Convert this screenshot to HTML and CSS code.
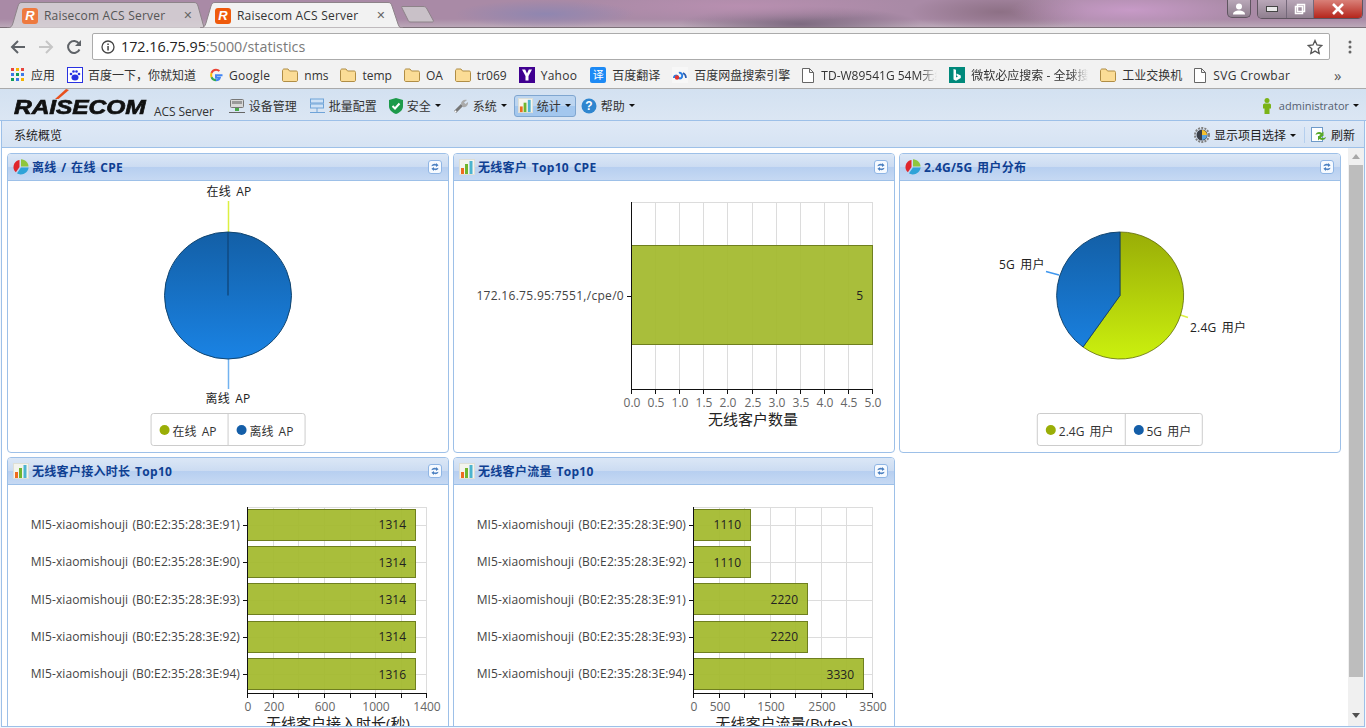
FILE: index.html
```html
<!DOCTYPE html>
<html lang="en">
<head>
    <meta charset="UTF-8">
    <title>Raisecom ACS Server</title>
    <link rel="stylesheet" href="styles.css">
</head>
<body>

    <svg class="defs" width="0" height="0">
        <defs>
            <linearGradient id="pieBlue" gradientUnits="userSpaceOnUse" x1="0" y1="232" x2="0" y2="359">
                <stop offset="0" stop-color="#135fa6"/>
                <stop offset="1" stop-color="#1a83e4"/>
            </linearGradient>
            <linearGradient id="pieGreen" gradientUnits="userSpaceOnUse" x1="0" y1="232" x2="0" y2="359">
                <stop offset="0" stop-color="#99ad07"/>
                <stop offset="1" stop-color="#cbf00e"/>
            </linearGradient>
            <symbol id="i-pie" viewBox="0 0 16 16">
                <path d="M6.500 1C3 1.500.3 4.500.5 8.500c.1 2 1 3.600 2.400 4.800L6.500 8z" fill="#e0262c"/>
                <path d="M8 .3V7.500h7.500C15.500 3.500 12 .5 8 .3z" fill="#8fc63c"/>
                <path d="M8 8.500h7.600C15.300 12.500 11.500 15.600 7.600 15.500 6.200 15.500 5 15 4 14.300z" fill="#2fa3d8"/>
            </symbol>
            <symbol id="i-bars" viewBox="0 0 16 16">
                <rect x=".5" y=".5" width="15" height="15" fill="#f4f4ee" stroke="#dedfd6"/>
                <rect x="2" y="9" width="3" height="6" fill="#ee6a1f"/>
                <rect x="6" y="5" width="3" height="10" fill="#6fb52e"/>
                <rect x="10.500" y="2" width="3" height="13" fill="#4cb4cf"/>
            </symbol>
            <symbol id="i-sync" viewBox="0 0 14 14">
                <rect x=".5" y=".5" width="13" height="13" rx="2.500" fill="#f6faff" stroke="#8fb5e4"/>
                <path d="M3.500 6.200C3.800 4.300 6 3.300 8 4.200V3l2.600 2.200L8 7V5.800C6.600 5.200 5.300 5.400 3.500 6.200z" fill="#4a7fc0"/>
                <path d="M10.500 7.800C10.200 9.700 8 10.700 6 9.800V11L3.400 8.800 6 7v1.200c1.400.6 2.700.4 4.500-.4z" fill="#4a7fc0"/>
            </symbol>
            <symbol id="i-folder" viewBox="0 0 16 14">
                <path d="M.5 3c0-1 .5-2 1.500-2h4l1.500 2H14c1 0 1.500.5 1.500 1.500V12c0 1-.5 1.500-1.500 1.500H2c-1 0-1.500-.5-1.500-1.500z" fill="#fbdc96" stroke="#b08d45"/>
            </symbol>
            <symbol id="i-doc" viewBox="0 0 12 15">
                <path d="M.5.500h7l4 4v10H.5zM7.500.500v4h4" fill="#fff" stroke="#666"/>
            </symbol>
        </defs>
    </svg>

    <div class="tabstrip">
        <div class="tab">
            <svg class="tab-shape" width="198" height="26" viewBox="0 0 198 26"><path d="M0 26C4 26 5 24 6 21L11 4C12 1 13 .5 15 .5H187C189 .5 190 1 191 4L196 22C197 25 197 26 198 26" fill="#d7d2d6" fill-opacity=".85" stroke="#8d8389"/></svg>
            <span class="favicon favicon-dim">R</span>
            <span class="tab-title tab-title-dim">Raisecom ACS Server</span>
            <span class="tab-close">✕</span>
        </div>
        <div class="tab tab-active">
            <svg class="tab-shape" width="203" height="26" viewBox="0 0 203 26"><path d="M0 26C4 26 5 24 6 21L11 4C12 1 13 .5 15 .5H188C190 .5 191 1 192 4L198 22C199 25 200 26 203 26z" fill="#f2f2f2" stroke="#8d8389"/></svg>
            <span class="favicon">R</span>
            <span class="tab-title">Raisecom ACS Server</span>
            <span class="tab-close">✕</span>
        </div>
        <svg class="new-tab" width="34" height="18" viewBox="0 0 34 18"><path d="M1 1.500H22C24 1.500 25 2 26 4L32 15C33 16.500 32 17 31 17H10C8 17 7.500 16.500 7 15L1 3C.5 2 .5 1.500 1 1.500z" fill="#c9c1c8" stroke="#8d8389"/></svg>
        <div class="window-controls">
            <span class="win-btn win-user">
                <svg width="14" height="12" viewBox="0 0 14 12"><circle cx="7" cy="3.500" r="3" fill="#fff"/><path d="M1 11.500c0-3 3-4 6-4s6 1 6 4z" fill="#fff"/></svg>
            </span>
            <div class="win-group">
                <span class="win-btn win-min"><svg width="12" height="6" viewBox="0 0 12 6"><rect x=".5" y=".5" width="11" height="5" fill="#e8e8e8" stroke="#444"/></svg></span>
                <span class="win-btn win-max"><svg width="12" height="12" viewBox="0 0 12 12"><path d="M3.500 1.500h7v7h-7zM1.500 3.500h7v7h-7z" fill="none" stroke="#fff" stroke-width="1.500"/></svg></span>
                <span class="win-btn win-close"><svg width="14" height="12" viewBox="0 0 14 12"><path d="M2 1l10 10M12 1L2 11" stroke="#fff" stroke-width="2.600"/></svg></span>
            </div>
        </div>
    </div>

    <div class="urlbar">
        <svg class="url-nav" width="16" height="16" viewBox="0 0 16 16"><path d="M15 8H2M8 2L2 8l6 6" fill="none" stroke="#5f6368" stroke-width="2"/></svg>
        <svg class="url-nav" width="16" height="16" viewBox="0 0 16 16"><path d="M1 8h13M8 2l6 6-6 6" fill="none" stroke="#c6c6c6" stroke-width="2"/></svg>
        <svg class="url-nav" width="16" height="16" viewBox="0 0 16 16"><path d="M13.500 10.500A6 6 0 1 1 13 4.500" fill="none" stroke="#5f6368" stroke-width="2"/><path d="M15 1v6H9z" fill="#5f6368"/></svg>
        <div class="omnibox">
            <svg width="14" height="14" viewBox="0 0 14 14"><circle cx="7" cy="7" r="6" fill="none" stroke="#444" stroke-width="1.300"/><rect x="6.300" y="6" width="1.500" height="4.500" fill="#444"/><rect x="6.300" y="3.500" width="1.500" height="1.500" fill="#444"/></svg>
            <span class="url-text">172.16.75.95<span class="url-dim">:5000/statistics</span></span>
            <svg class="url-star" width="16" height="16" viewBox="0 0 16 16"><path d="M8 1.500l2 4.500 4.800.5-3.600 3.200 1 4.800L8 12.100 3.800 14.500l1-4.800L1.200 6.500 6 6z" fill="none" stroke="#555" stroke-width="1.300"/></svg>
        </div>
        <svg class="url-menu" width="4" height="14" viewBox="0 0 4 14"><circle cx="2" cy="2" r="1.500" fill="#666"/><circle cx="2" cy="7" r="1.500" fill="#666"/><circle cx="2" cy="12" r="1.500" fill="#666"/></svg>
    </div>

    <div class="bookmarks">
        <div class="bm bm-tight">
            <svg width="14" height="14" viewBox="0 0 14 14">
                <rect width="3" height="3" fill="#e8453c"/><rect x="5" width="3" height="3" fill="#f4b400"/><rect x="10" width="3" height="3" fill="#e8453c"/>
                <rect y="5" width="3" height="3" fill="#3b78e7"/><rect x="5" y="5" width="3" height="3" fill="#0f9d58"/><rect x="10" y="5" width="3" height="3" fill="#3b78e7"/>
                <rect y="10" width="3" height="3" fill="#0f9d58"/><rect x="5" y="10" width="3" height="3" fill="#3b78e7"/><rect x="10" y="10" width="3" height="3" fill="#f4b400"/>
            </svg>
            <span>应用</span>
        </div>
        <div class="bm bm-tight">
            <svg width="16" height="16" viewBox="0 0 16 16"><rect x=".5" y=".5" width="15" height="15" fill="#fff" stroke="#2932e1"/><ellipse cx="8" cy="10.500" rx="3.500" ry="3" fill="#2932e1"/><circle cx="4" cy="7" r="1.300" fill="#2932e1"/><circle cx="6.500" cy="4.500" r="1.300" fill="#2932e1"/><circle cx="9.500" cy="4.500" r="1.300" fill="#2932e1"/><circle cx="12" cy="7" r="1.300" fill="#2932e1"/></svg>
            <span>百度一下，你就知道</span>
        </div>
        <div class="bm bm-tight">
            <svg width="16" height="16" viewBox="0 0 16 16"><path d="M14.500 8.200H8v2.500h3.800C11.300 12.400 9.800 13.300 8 13.300" fill="none" stroke="#4285f4" stroke-width="2"/><path d="M8 13.300c-2 0-3.800-1.300-4.500-3.100" fill="none" stroke="#34a853" stroke-width="2"/><path d="M3.500 10.200c-.5-1.400-.5-2.900 0-4.300" fill="none" stroke="#fbbc05" stroke-width="2"/><path d="M3.500 5.900C4.200 4 6 2.700 8 2.700c1.300 0 2.500.5 3.400 1.300" fill="none" stroke="#ea4335" stroke-width="2"/></svg>
            <span class="bm-wide">Google</span>
        </div>
        <div class="bm"><svg width="16" height="14"><use href="#i-folder"/></svg><span>nms</span></div>
        <div class="bm"><svg width="16" height="14"><use href="#i-folder"/></svg><span>temp</span></div>
        <div class="bm"><svg width="16" height="14"><use href="#i-folder"/></svg><span>OA</span></div>
        <div class="bm"><svg width="16" height="14"><use href="#i-folder"/></svg><span>tr069</span></div>
        <div class="bm">
            <svg width="16" height="16" viewBox="0 0 16 16"><rect width="16" height="16" fill="#400090"/><path d="M3 2.500h3.200L8 6.500l1.800-4H13L9.500 9v4.500h-3V9z" fill="#fff"/></svg>
            <span class="bm-wide">Yahoo</span>
        </div>
        <div class="bm bm-translate">
            <span class="ico-translate">译</span>
            <span>百度翻译</span>
        </div>
        <div class="bm">
            <svg width="16" height="16" viewBox="0 0 16 16"><rect width="16" height="16" fill="#f7f7f7"/><path d="M2 11c0-3 3-3 4-1s3 2 4 0-1-5-3-4" fill="none" stroke="#2a7de1" stroke-width="2"/><circle cx="5" cy="10.500" r="2.200" fill="#e2332e"/><path d="M11 6c2 1 3 3 3 5" fill="none" stroke="#2a5db0" stroke-width="1.600"/></svg>
            <span>百度网盘搜索引擎</span>
        </div>
        <div class="bm bm-doc"><svg width="12" height="15"><use href="#i-doc"/></svg><span class="bm-fade bm-fade-td">TD-W89541G 54M无线</span></div>
        <div class="bm">
            <svg width="16" height="16" viewBox="0 0 16 16"><rect width="16" height="16" fill="#00897b"/><path d="M4.500 2v10.500l2.500 1.200 4.800-2.800V8.500L7.500 6.500v2L9 9.300 7 10.500V2.800z" fill="#fff"/></svg>
            <span class="bm-fade bm-fade-bing">微软必应搜索 - 全球搜索</span>
        </div>
        <div class="bm"><svg width="16" height="14"><use href="#i-folder"/></svg><span>工业交换机</span></div>
        <div class="bm bm-doc"><svg width="12" height="15"><use href="#i-doc"/></svg><span class="bm-wide">SVG Crowbar</span></div>
        <span class="bm-more">»</span>
    </div>

    <div class="app-header">
        <div class="logo">
            <span class="logo-text">RAISECOM</span>
            <svg class="logo-swoosh" width="14" height="10" viewBox="0 0 14 10"><path d="M0 10L11 0l3 1L3.500 10z" fill="#e8501e"/></svg>
        </div>
        <span class="logo-sub">ACS Server</span>
        <nav class="nav">
            <div class="nav-item">
                <svg width="16" height="16" viewBox="0 0 16 16"><rect x="1.500" y="1.500" width="13" height="8" rx="1" fill="#d8d8d8" stroke="#777"/><rect x="3" y="3" width="10" height="3" fill="#999"/><rect x="6" y="10" width="4" height="3" fill="#4aa84a"/><path d="M0 14.500h16" stroke="#666"/></svg>
                <span>设备管理</span>
            </div>
            <div class="nav-item">
                <svg width="16" height="16" viewBox="0 0 16 16"><rect x="1.500" y="1" width="13" height="4" fill="#cfe2f6" stroke="#6fa3d8"/><rect x="1.500" y="6" width="13" height="4" fill="#cfe2f6" stroke="#6fa3d8"/><path d="M8 10v4M1 14.500h15" stroke="#6fa3d8"/></svg>
                <span>批量配置</span>
            </div>
            <div class="nav-item">
                <svg width="14" height="16" viewBox="0 0 14 16"><path d="M7 0l7 2v6c0 4-3 6.500-7 8-4-1.500-7-4-7-8V2z" fill="#1c9a4a"/><path d="M3.500 8l2.500 2.500 4.500-5" fill="none" stroke="#fff" stroke-width="2"/></svg>
                <span>安全</span><i class="caret"></i>
            </div>
            <div class="nav-item">
                <svg width="16" height="16" viewBox="0 0 16 16"><path d="M2 14l7-7" stroke="#777" stroke-width="3"/><circle cx="2.500" cy="13.500" r="1" fill="#fff"/><path d="M8 6c0-3 3-5 6-4l-3 2.500 1.500 1.500L15 4c.5 3-2 6-5 5z" fill="#aaa"/></svg>
                <span>系统</span><i class="caret"></i>
            </div>
            <div class="nav-item nav-active">
                <svg width="15" height="15"><use href="#i-bars"/></svg>
                <span>统计</span><i class="caret"></i>
            </div>
            <div class="nav-item">
                <svg width="16" height="16" viewBox="0 0 16 16"><circle cx="8" cy="8" r="7.500" fill="#2f86cf"/><text class="help-mark" x="8" y="12" text-anchor="middle">?</text></svg>
                <span>帮助</span><i class="caret"></i>
            </div>
        </nav>
        <div class="user">
            <svg width="10" height="16" viewBox="0 0 10 16"><circle cx="5" cy="2.500" r="2.500" fill="#7ab317"/><path d="M1 7c0-1 1-1.500 2-1.500h4c1 0 2 .5 2 1.500v3.500H7.500V16h-5v-5.500H1z" fill="#7ab317"/></svg>
            <span>administrator</span><i class="caret"></i>
        </div>
    </div>

    <div class="workspace">
        <div class="toolbar">
            <span class="toolbar-title">系统概览</span>
            <div class="toolbar-right">
                <div class="tool">
                    <svg width="16" height="16" viewBox="0 0 16 16"><circle cx="8" cy="8" r="7" fill="none" stroke="#808080" stroke-width="2" stroke-dasharray="2 1.200"/><circle cx="8" cy="8" r="5.500" fill="#3a3f48"/><path d="M8 3a5 5 0 0 1 5 5H8z" fill="#f3c02f"/><path d="M13 8a5 5 0 0 1-5 5V8z" fill="#5ba3dd"/></svg>
                    <span>显示项目选择</span><i class="caret"></i>
                </div>
                <span class="tool-sep"></span>
                <div class="tool">
                    <svg width="16" height="16" viewBox="0 0 16 16"><rect x=".5" y=".5" width="11" height="14" fill="#fff" stroke="#6e9ac9"/><path d="M4.500 8C5 5 8.500 4 11 6l1.500-1.500V9H8l1.500-1.500C8 6.500 6 7 4.500 8z" fill="#57a829"/><path d="M15 10c-.5 3-4 4-6.500 2L7 13.500V9h4.500L10 10.500c1.500 1 3.500.5 5-.5z" fill="#57a829"/></svg>
                    <span>刷新</span>
                </div>
            </div>
        </div>

        <div class="content">
            <div class="panels">

                <section class="panel">
                    <header class="panel-head">
                        <svg width="16" height="16"><use href="#i-pie"/></svg>
                        <h3>离线 / 在线 CPE</h3>
                        <svg class="panel-sync" width="14" height="14"><use href="#i-sync"/></svg>
                    </header>
                    <div class="panel-body">
                        <svg class="chart" width="440" height="271" viewBox="8 181 440 271">
                            <path d="M228.500 201V232" stroke="#dcf042" stroke-width="1.500"/>
                            <path d="M228.500 359V389" stroke="#72b2f0" stroke-width="1.500"/>
                            <circle cx="228" cy="295.500" r="63.500" fill="url(#pieBlue)" stroke="#12456f"/>
                            <path d="M228 232V295.500" stroke="#0f4a82" stroke-width="1.500"/>
                            <text class="pie-label" x="229" y="196" text-anchor="middle">在线 AP</text>
                            <text class="pie-label" x="228" y="403" text-anchor="middle">离线 AP</text>
                        </svg>
                        <div class="legend">
                            <div class="legend-item"><i class="dot dot-green"></i><span>在线 AP</span></div>
                            <div class="legend-item"><i class="dot dot-blue"></i><span>离线 AP</span></div>
                        </div>
                    </div>
                </section>

                <section class="panel">
                    <header class="panel-head">
                        <svg width="16" height="16"><use href="#i-bars"/></svg>
                        <h3>无线客户 Top10 CPE</h3>
                        <svg class="panel-sync" width="14" height="14"><use href="#i-sync"/></svg>
                    </header>
                    <div class="panel-body">
                        <svg class="chart" width="440" height="271" viewBox="454 181 440 271">
                            <path class="grid" d="M631.500 202.500H872.500M655.500 202V389M679.500 202V389M703.500 202V389M727.500 202V389M752.500 202V389M776.500 202V389M800.500 202V389M824.500 202V389M848.500 202V389M872.500 202V389"/>
                            <rect class="bar" x="631.500" y="245.500" width="241" height="99"/>
                            <path class="axis" d="M631.500 202V389.500H872.500M631.500 389V394M655.500 389V394M679.500 389V394M703.500 389V394M727.500 389V394M752.500 389V394M776.500 389V394M800.500 389V394M824.500 389V394M848.500 389V394M872.500 389V394M627 296.500H631"/>
                            <text class="bar-value" x="863" y="300" text-anchor="end">5</text>
                            <text class="cat-label cat-label-ip" x="624" y="300" text-anchor="end">172.16.75.95:7551,/cpe/0</text>
                            <g class="tick-label" text-anchor="middle">
                                <text x="632" y="407">0.0</text><text x="656" y="407">0.5</text><text x="680" y="407">1.0</text><text x="704" y="407">1.5</text><text x="728" y="407">2.0</text><text x="753" y="407">2.5</text><text x="777" y="407">3.0</text><text x="801" y="407">3.5</text><text x="825" y="407">4.0</text><text x="849" y="407">4.5</text><text x="873" y="407">5.0</text>
                            </g>
                            <text class="axis-title" x="753" y="425" text-anchor="middle">无线客户数量</text>
                        </svg>
                    </div>
                </section>

                <section class="panel">
                    <header class="panel-head">
                        <svg width="16" height="16"><use href="#i-pie"/></svg>
                        <h3>2.4G/5G 用户分布</h3>
                        <svg class="panel-sync" width="14" height="14"><use href="#i-sync"/></svg>
                    </header>
                    <div class="panel-body">
                        <svg class="chart" width="440" height="271" viewBox="900 181 440 271">
                            <path d="M1179 314.500L1188 317.500" stroke="#dcf042" stroke-width="1.500"/>
                            <path d="M1059 275L1046 271.500" stroke="#3f97ee" stroke-width="1.500"/>
                            <path d="M1120 295.500V232A63.500 63.500 0 1 1 1083 347z" fill="url(#pieGreen)" stroke="#5f6b0a" stroke-width=".8"/>
                            <path d="M1120 295.500L1083 347A63.500 63.500 0 0 1 1120 232z" fill="url(#pieBlue)" stroke="#12456f"/>
                            <text class="pie-label" x="999" y="269">5G 用户</text>
                            <text class="pie-label" x="1190" y="332">2.4G 用户</text>
                        </svg>
                        <div class="legend">
                            <div class="legend-item"><i class="dot dot-green"></i><span>2.4G 用户</span></div>
                            <div class="legend-item"><i class="dot dot-blue"></i><span>5G 用户</span></div>
                        </div>
                    </div>
                </section>

                <section class="panel">
                    <header class="panel-head">
                        <svg width="16" height="16"><use href="#i-bars"/></svg>
                        <h3>无线客户接入时长 Top10</h3>
                        <svg class="panel-sync" width="14" height="14"><use href="#i-sync"/></svg>
                    </header>
                    <div class="panel-body">
                        <svg class="chart" width="440" height="271" viewBox="8 485 440 271">
                            <path class="grid" d="M247.500 507.500H426.500M247 525.500H426M247 562.500H426M247 600.500H426M247 637.500H426M247 674.500H426M273.500 507V693M298.500 507V693M324.500 507V693M350.500 507V693M375.500 507V693M401.500 507V693M426.500 507V693"/>
                            <rect class="bar" x="247.500" y="509.500" width="168" height="31"/>
                            <rect class="bar" x="247.500" y="546.500" width="168" height="31"/>
                            <rect class="bar" x="247.500" y="583.500" width="168" height="31"/>
                            <rect class="bar" x="247.500" y="621.500" width="168" height="31"/>
                            <rect class="bar" x="247.500" y="658.500" width="168" height="31"/>
                            <path class="axis" d="M247.500 507V693.500H426.500M247.500 693V698M273.500 693V698M298.500 693V698M324.500 693V698M350.500 693V698M375.500 693V698M401.500 693V698M426.500 693V698M243 525.500H247M243 562.500H247M243 600.500H247M243 637.500H247M243 674.500H247"/>
                            <g class="bar-value" text-anchor="end">
                                <text x="406" y="529">1314</text><text x="406" y="567">1314</text><text x="406" y="604">1314</text><text x="406" y="641">1314</text><text x="406" y="679">1316</text>
                            </g>
                            <g class="cat-label" text-anchor="end">
                                <text x="240" y="529">MI5-xiaomishouji (B0:E2:35:28:3E:91)</text>
                                <text x="240" y="566">MI5-xiaomishouji (B0:E2:35:28:3E:90)</text>
                                <text x="240" y="604">MI5-xiaomishouji (B0:E2:35:28:3E:93)</text>
                                <text x="240" y="641">MI5-xiaomishouji (B0:E2:35:28:3E:92)</text>
                                <text x="240" y="678">MI5-xiaomishouji (B0:E2:35:28:3E:94)</text>
                            </g>
                            <g class="tick-label" text-anchor="middle">
                                <text x="248" y="711">0</text><text x="274" y="711">200</text><text x="325" y="711">600</text><text x="376" y="711">1000</text><text x="427" y="711">1400</text>
                            </g>
                            <text class="axis-title" x="338" y="729" text-anchor="middle">无线客户接入时长(秒)</text>
                        </svg>
                    </div>
                </section>

                <section class="panel">
                    <header class="panel-head">
                        <svg width="16" height="16"><use href="#i-bars"/></svg>
                        <h3>无线客户流量 Top10</h3>
                        <svg class="panel-sync" width="14" height="14"><use href="#i-sync"/></svg>
                    </header>
                    <div class="panel-body">
                        <svg class="chart" width="440" height="271" viewBox="454 485 440 271">
                            <path class="grid" d="M693.500 507.500H872.500M693 525.500H872M693 562.500H872M693 600.500H872M693 637.500H872M693 674.500H872M719.500 507V693M744.500 507V693M770.500 507V693M795.500 507V693M821.500 507V693M846.500 507V693M872.500 507V693"/>
                            <rect class="bar" x="693.500" y="509.500" width="57" height="31"/>
                            <rect class="bar" x="693.500" y="546.500" width="57" height="31"/>
                            <rect class="bar" x="693.500" y="583.500" width="114" height="31"/>
                            <rect class="bar" x="693.500" y="621.500" width="114" height="31"/>
                            <rect class="bar" x="693.500" y="658.500" width="170" height="31"/>
                            <path class="axis" d="M693.500 507V693.500H872.500M693.500 693V698M719.500 693V698M744.500 693V698M770.500 693V698M795.500 693V698M821.500 693V698M846.500 693V698M872.500 693V698M689 525.500H693M689 562.500H693M689 600.500H693M689 637.500H693M689 674.500H693"/>
                            <g class="bar-value" text-anchor="end">
                                <text x="741" y="529">1110</text><text x="741" y="567">1110</text><text x="798" y="604">2220</text><text x="798" y="641">2220</text><text x="854" y="679">3330</text>
                            </g>
                            <g class="cat-label" text-anchor="end">
                                <text x="686" y="529">MI5-xiaomishouji (B0:E2:35:28:3E:90)</text>
                                <text x="686" y="566">MI5-xiaomishouji (B0:E2:35:28:3E:92)</text>
                                <text x="686" y="604">MI5-xiaomishouji (B0:E2:35:28:3E:91)</text>
                                <text x="686" y="641">MI5-xiaomishouji (B0:E2:35:28:3E:93)</text>
                                <text x="686" y="678">MI5-xiaomishouji (B0:E2:35:28:3E:94)</text>
                            </g>
                            <g class="tick-label" text-anchor="middle">
                                <text x="694" y="711">0</text><text x="720" y="711">500</text><text x="771" y="711">1500</text><text x="822" y="711">2500</text><text x="873" y="711">3500</text>
                            </g>
                            <text class="axis-title" x="784" y="729" text-anchor="middle">无线客户流量(Bytes)</text>
                        </svg>
                    </div>
                </section>

            </div>
            <div class="scrollbar">
                <i class="scroll-up"></i>
                <div class="scroll-thumb"></div>
                <i class="scroll-down"></i>
            </div>
        </div>
    </div>

</body>
</html>
```

FILE: styles.css
```css
* {
    box-sizing: border-box;
}

html, body {
    margin: 0;
    padding: 0;
}

body {
    width: 1366px;
    height: 728px;
    overflow: hidden;
    background-color: #f4f8fd;
    font-family: "Open Sans", "Noto Sans CJK SC", sans-serif;
    font-size: 12px;
    color: #333;
}

.defs {
    position: absolute;
}

/* browser frame */
.tabstrip {
    position: relative;
    display: flex;
    align-items: flex-end;
    height: 28px;
    padding-left: 7px;
    border-bottom: 1px solid #7d7079;
    background:
        radial-gradient(ellipse 90px 14px at 545px 14px, #8f86b0 0, transparent 100%),
        radial-gradient(ellipse 170px 16px at 740px 6px, #b88fb0 0, transparent 100%),
        radial-gradient(ellipse 120px 18px at 800px 24px, #7d6a80 0, transparent 100%),
        radial-gradient(ellipse 120px 20px at 1130px 10px, #c79ac7 0, transparent 100%),
        radial-gradient(ellipse 90px 20px at 1000px 12px, #8d7085 0, transparent 100%),
        linear-gradient(to bottom, #a98aa6 0, #a98aa6 70%, #bba8b8 100%);
}

.tab {
    position: relative;
    display: flex;
    align-items: center;
    width: 198px;
    height: 25px;
    padding: 2px 0 0 15px;
}

.tab-active {
    width: 203px;
    margin-left: -5px;
}

.tab-shape {
    position: absolute;
    left: 0;
    bottom: -1px;
}

.favicon {
    position: relative;
    width: 16px;
    height: 16px;
    border-radius: 3px;
    background-color: #ef5a0c;
    color: #fff;
    font-family: "Liberation Sans", sans-serif;
    font-size: 13px;
    font-weight: bold;
    font-style: italic;
    line-height: 16px;
    text-align: center;
}

.favicon-dim {
    background-color: #ee7a3f;
}

.tab-title {
    position: relative;
    margin-left: 6px;
    font-size: 12px;
    letter-spacing: .2px;
    color: #333;
    white-space: nowrap;
}

.tab-title-dim {
    color: #555;
}

.tab-close {
    position: relative;
    margin-left: 18px;
    font-size: 11px;
    font-family: "DejaVu Sans", sans-serif;
    color: #666;
}

.new-tab {
    margin: 0 0 4px -2px;
}

.window-controls {
    position: absolute;
    top: 0;
    right: 3px;
    display: flex;
    gap: 6px;
}

.win-btn {
    display: flex;
    align-items: center;
    justify-content: center;
    height: 18px;
}

.win-user {
    width: 24px;
    border: 1px solid #5f5560;
    border-top: none;
    border-radius: 0 0 5px 5px;
    background: linear-gradient(to bottom, #b9a7b8, #8f7f8f);
}

.win-group {
    display: flex;
    border: 1px solid #5f5560;
    border-top: none;
    border-radius: 0 0 5px 5px;
    overflow: hidden;
}

.win-min, .win-max {
    width: 29px;
    background: linear-gradient(to bottom, #b9a7b8, #8f7f8f);
    border-right: 1px solid #74687a;
}

.win-max {
    width: 27px;
}

.win-close {
    width: 48px;
    background: linear-gradient(to bottom, #d98078, #b5261c);
}

.urlbar {
    display: flex;
    align-items: center;
    height: 32px;
    padding: 5px 0 0 10px;
    background-color: #f2f2f2;
}

.url-nav {
    margin-right: 12px;
}

.omnibox {
    display: flex;
    align-items: center;
    width: 1238px;
    height: 27px;
    margin-left: -2px;
    padding: 0 6px 0 8px;
    border: 1px solid #ababab;
    border-radius: 2px;
    background-color: #fff;
}

.url-text {
    margin-left: 6px;
    font-size: 14.3px;
    color: #222;
}

.url-dim {
    color: #7a7a7a;
}

.url-star {
    margin-left: auto;
}

.url-menu {
    margin-left: 18px;
}

.bookmarks {
    display: flex;
    align-items: center;
    gap: 12px;
    height: 29px;
    padding: 2px 0 0 11px;
    border-bottom: 1px solid #aaa;
    background-color: #f2f2f2;
    white-space: nowrap;
    color: #333;
}

.bm {
    display: flex;
    align-items: center;
    gap: 6px;
}

.bm-tight {
    gap: 5px;
}

.bm-tight:first-child {
    gap: 6px;
}

.bm-wide {
    letter-spacing: .3px;
}

.bm-translate {
    margin-left: 1px;
}

.ico-translate {
    width: 16px;
    height: 16px;
    border-radius: 2px;
    background-color: #1d8af5;
    color: #fff;
    font-size: 11px;
    line-height: 16px;
    text-align: center;
}

.bm-fade {
    overflow: hidden;
    -webkit-mask-image: linear-gradient(to right, #000 85%, transparent 100%);
    mask-image: linear-gradient(to right, #000 85%, transparent 100%);
}

.bm-fade-td {
    width: 116px;
}

.bm-fade-bing {
    width: 117px;
}

.bm-doc {
    gap: 7px;
}

.bm-more {
    position: absolute;
    left: 1334px;
    top: 65px;
    font-size: 15px;
    color: #555;
}

/* app header */
.app-header {
    display: flex;
    align-items: center;
    height: 32px;
    padding: 2px 0 0 14px;
    border-bottom: 1px solid #9dc0e8;
    background: linear-gradient(to bottom, #d3e1f1, #dbe6f3);
}

.logo {
    position: relative;
    flex: none;
    width: 133px;
    height: 22px;
}

.logo-text {
    position: absolute;
    left: 0;
    top: 1px;
    font-family: "Liberation Sans", sans-serif;
    font-size: 21px;
    font-weight: bold;
    font-style: italic;
    line-height: 22px;
    color: #111;
    letter-spacing: -.1px;
    -webkit-text-stroke: .7px #111;
    transform: scaleX(1.17);
    transform-origin: left center;
}

.logo-swoosh {
    position: absolute;
    left: 41px;
    top: -6px;
}

.logo-sub {
    margin: 12px 0 0 7px;
    letter-spacing: -.1px;
    color: #333;
}

.nav {
    display: flex;
    align-items: center;
    gap: 4px;
    margin-left: 11px;
}

.nav-item {
    display: flex;
    align-items: center;
    gap: 4px;
    height: 22px;
    padding: 0 4px;
    color: #333;
}

.nav-active {
    margin: 0 -3px 0 -1px;
    padding: 0 4px 0 3px;
    border: 1px solid #7fa6d0;
    border-radius: 3px;
    background: linear-gradient(to bottom, #bcd5f0 0, #bcd5f0 50%, #a3c7ee 50%, #a3c7ee 100%);
}

.caret {
    display: inline-block;
    width: 0;
    height: 0;
    border: 3px solid transparent;
    border-top: 3px solid #111;
    border-bottom: none;
}

.help-mark {
    font-family: "Liberation Sans", sans-serif;
    font-size: 12px;
    font-weight: bold;
    fill: #fff;
}

.user {
    display: flex;
    align-items: center;
    gap: 7px;
    margin-left: auto;
    padding-right: 7px;
    font-size: 11px;
    color: #556070;
}

.user .caret {
    margin-left: -3px;
}

/* workspace */
.workspace {
    display: flex;
    flex-direction: column;
    width: 1364px;
    height: 606px;
    margin-left: 1px;
    border: solid #9dc0e8;
    border-width: 0 1px 1px 1px;
    background-color: #fff;
}

.toolbar {
    display: flex;
    align-items: center;
    flex: none;
    height: 27px;
    padding: 2px 9px 0 12px;
    border-bottom: 1px solid #9dc0e8;
    background: linear-gradient(to bottom, #dfe9f6, #d6e3f3);
    color: #222;
}

.toolbar-right {
    display: flex;
    align-items: center;
    margin-left: auto;
}

.tool {
    display: flex;
    align-items: center;
    gap: 4px;
}

.tool-sep {
    width: 1px;
    height: 16px;
    margin: 0 6px 0 8px;
    background-color: #b5cfee;
}

.content {
    display: flex;
    flex: 1;
    min-height: 0;
}

.panels {
    display: grid;
    flex: 1;
    grid-template-columns: repeat(3, 442px);
    grid-auto-rows: 300px;
    gap: 4px;
    padding: 5px 0 0 5px;
    overflow: hidden;
}

.panel {
    border: 1px solid #9dc0e8;
    border-radius: 4px;
    background-color: #fff;
    overflow: hidden;
}

.panel-head {
    display: flex;
    align-items: center;
    gap: 4px;
    height: 27px;
    padding: 0 6px 0 5px;
    border-bottom: 1px solid #9dc0e8;
    background: linear-gradient(to bottom, #dbe7f6 0, #ccdcf2 48%, #b7cff0 52%, #c6d9f3 100%);
}

.panel-head h3 {
    margin: 0 0 1px -1px;
    font-size: 12px;
    font-weight: bold;
    letter-spacing: .3px;
    word-spacing: 1.2px;
    color: #0f3f92;
}

.panel-sync {
    margin-left: auto;
}

.panel-body {
    position: relative;
}

.chart {
    display: block;
}

.chart text {
    font-family: "Open Sans", "Noto Sans CJK SC", sans-serif;
}

.pie-label {
    font-size: 12px;
    letter-spacing: .2px;
    word-spacing: 2px;
    fill: #222;
}

.cat-label {
    font-size: 12px;
    letter-spacing: .1px;
    word-spacing: 1px;
    fill: #444;
}

.cat-label-ip {
    letter-spacing: .3px;
}

.tick-label {
    font-size: 12px;
    fill: #666;
}

.bar-value {
    font-size: 12px;
    fill: #222;
}

.chart .axis-title {
    font-size: 15px;
    fill: #222;
}

.grid {
    fill: none;
    stroke: #dcdcdc;
}

.axis {
    fill: none;
    stroke: #111;
}

.bar {
    fill: #a2b92a;
    fill-opacity: .92;
    stroke: #6f7f1f;
}

.legend {
    position: absolute;
    left: 50%;
    bottom: 6px;
    display: flex;
    height: 33px;
    transform: translateX(-50%);
    border: 1px solid #ccc;
    border-radius: 3px;
    background-color: #fff;
    white-space: nowrap;
}

.legend-item {
    display: flex;
    align-items: center;
    gap: 3px;
    padding: 0 11px 0 8px;
    word-spacing: 2px;
}

.legend-item + .legend-item {
    border-left: 1px solid #ccc;
}

.legend-item span {
    margin-top: 3px;
}

.dot {
    width: 10px;
    height: 10px;
    border-radius: 50%;
}

.dot-green {
    background-color: #9aae07;
}

.dot-blue {
    background-color: #145ea8;
}

/* scrollbar */
.scrollbar {
    display: flex;
    flex-direction: column;
    align-items: center;
    flex: none;
    width: 16px;
    background-color: #f0f0f0;
}

.scroll-up {
    width: 0;
    height: 0;
    margin-top: 6px;
    border: 4px solid transparent;
    border-bottom: 5px solid #a8a8a8;
    border-top: none;
}

.scroll-thumb {
    width: 14px;
    height: 512px;
    margin-top: 6px;
    background-color: #bdbdbd;
}

.scroll-down {
    width: 0;
    height: 0;
    margin-top: 36px;
    border: 4px solid transparent;
    border-top: 5px solid #505050;
    border-bottom: none;
}
```
